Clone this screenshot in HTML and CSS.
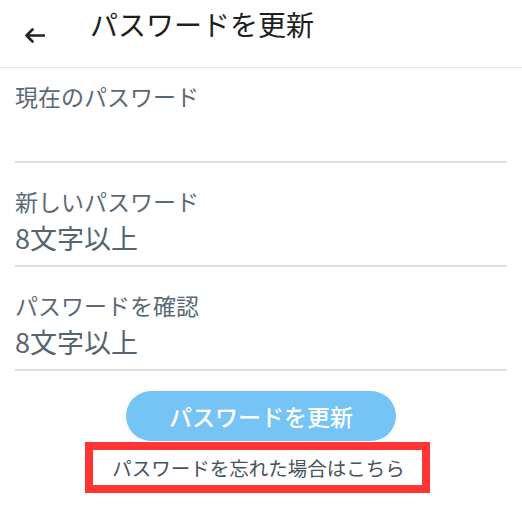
FILE: index.html
```html
<!DOCTYPE html>
<html lang="ja">
<head>
    <meta charset="UTF-8">
    <meta name="viewport" content="width=device-width, initial-scale=1.0">
    <title>パスワードを更新</title>
    <link rel="stylesheet" href="styles.css">
</head>
<body>
    <div class="header">
        <button class="back" aria-label="戻る">
            <svg width="21" height="15" viewBox="0 0 21 15">
                <path d="M20 7.5H2.5M8.5 1.5l-6 6 6 6" fill="none" stroke="#222" stroke-width="2.6" stroke-linecap="round" stroke-linejoin="round"/>
            </svg>
        </button>
        <h1 class="title">パスワードを更新</h1>
    </div>

    <form class="form">
        <div class="field first">
            <label class="label" for="currentPassword">現在のパスワード</label>
            <input class="input" type="password" id="currentPassword">
        </div>
        <div class="field">
            <label class="label" for="newPassword">新しいパスワード</label>
            <input class="input" type="password" id="newPassword" placeholder="8文字以上">
        </div>
        <div class="field">
            <label class="label" for="confirmPassword">パスワードを確認</label>
            <input class="input" type="password" id="confirmPassword" placeholder="8文字以上">
        </div>
        <button type="button" class="submit">パスワードを更新</button>
        <a class="forgot" href="#">パスワードを忘れた場合はこちら</a>
    </form>
</body>
</html>
```

FILE: styles.css
```css
body {
    font-family: "Noto Sans CJK JP", "Noto Sans", sans-serif;
    background-color: #fff;
    color: #222;
    margin: 0;
    padding: 0;
}
.header {
    display: flex;
    align-items: flex-start;
    height: 67px;
    border-bottom: 1px solid #e4e7ea;
}
.back {
    display: flex;
    margin: 28px 0 0 24px;
    padding: 0;
    border: none;
    background: none;
}
.title {
    margin: 4px 0 0 45px;
    font-size: 28px;
    line-height: 40px;
    font-weight: normal;
    color: #1e1e1e;
}
.form {
    display: flex;
    flex-direction: column;
    padding: 0 15px;
}
.field {
    display: flex;
    flex-direction: column;
    padding: 23px 0 7px;
    border-bottom: 2px solid #dbe2e7;
}
.field.first {
    padding: 13px 0 8px;
}
.label {
    font-size: 23px;
    line-height: 30px;
    color: #5b6976;
    margin-bottom: 2px;
}
.input {
    font-family: inherit;
    font-size: 27px;
    line-height: 40px;
    height: 40px;
    padding: 0;
    border: none;
    outline: none;
    color: #4f5d6a;
}
.input::placeholder {
    color: #566471;
}
.submit {
    align-self: center;
    width: 270px;
    height: 50px;
    margin-top: 20px;
    border: none;
    border-radius: 25px;
    background-color: #76c3f6;
    color: #fff;
    font-family: inherit;
    font-size: 23px;
    font-weight: 500;
}
.forgot {
    align-self: center;
    margin: 1px 7px 0 0;
    padding: 0 17px 0 19px;
    border: 8px solid #ff3434;
    font-size: 19.5px;
    line-height: 35px;
    color: #46535f;
    text-decoration: none;
}
```
